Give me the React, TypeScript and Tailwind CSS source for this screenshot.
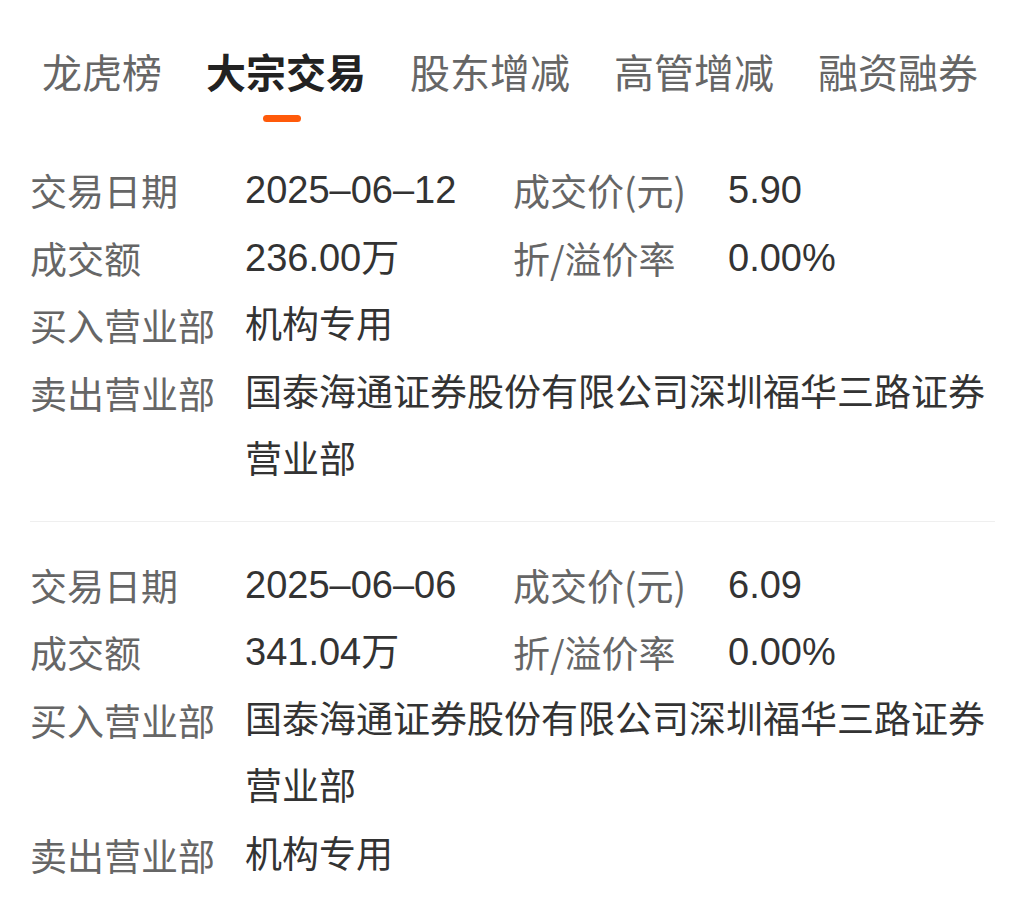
const tabs = ['龙虎榜', '大宗交易', '股东增减', '高管增减', '融资融券'];

type Deal = {
  date: string;
  price: string;
  amount: string;
  rate: string;
  buyer: string;
  seller: string;
};

const deals: Deal[] = [
  {
    date: '2025–06–12',
    price: '5.90',
    amount: '236.00万',
    rate: '0.00%',
    buyer: '机构专用',
    seller: '国泰海通证券股份有限公司深圳福华三路证券营业部',
  },
  {
    date: '2025–06–06',
    price: '6.09',
    amount: '341.04万',
    rate: '0.00%',
    buyer: '国泰海通证券股份有限公司深圳福华三路证券营业部',
    seller: '机构专用',
  },
];

const valueFont = { fontFamily: '"Liberation Sans", "Noto Sans CJK SC", sans-serif' };

function DealBlock({ deal }: { deal: Deal }) {
  return (
    <div className="grid grid-cols-[215px_268px_215px_1fr] leading-[67.5px] text-[37px]">
      <div className="text-[#666666]">交易日期</div>
      <div className="text-[38px] text-[#333333]" style={valueFont}>{deal.date}</div>
      <div className="text-[#666666]">成交价(元)</div>
      <div className="text-[38px] text-[#333333]" style={valueFont}>{deal.price}</div>

      <div className="text-[#666666]">成交额</div>
      <div className="text-[38px] text-[#333333]" style={valueFont}>{deal.amount}</div>
      <div className="text-[#666666]">折/溢价率</div>
      <div className="text-[38px] text-[#333333]" style={valueFont}>{deal.rate}</div>

      <div className="text-[#666666]">买入营业部</div>
      <div className="col-span-3 text-[#333333]" style={valueFont}>{deal.buyer}</div>

      <div className="text-[#666666]">卖出营业部</div>
      <div className="col-span-3 text-[#333333]" style={valueFont}>{deal.seller}</div>
    </div>
  );
}

function App() {
  return (
    <div
      className="min-h-screen bg-white"
      style={{ fontFamily: '"Noto Sans CJK SC", "Noto Sans", sans-serif' }}
    >
      <div className="flex gap-[44px] pl-[42px] pt-[51px]">
        {tabs.map((t) => {
          const active = t === '大宗交易';
          return (
            <div key={t} className="flex flex-col items-center">
              <span
                className={
                  active
                    ? 'text-[40px] leading-none font-bold text-[#222222]'
                    : 'text-[40px] leading-none text-[#666666]'
                }
              >
                {t}
              </span>
              <span
                className={
                  active
                    ? 'mt-[24px] mr-[9px] h-[7px] w-[38px] rounded-full bg-[#ff5a0a]'
                    : 'mt-[24px] h-[7px] w-[38px]'
                }
              />
            </div>
          );
        })}
      </div>

      <div className="pl-[30px] pr-[29px] pt-[35px]">
        <DealBlock deal={deals[0]} />
        <div className="mt-[26px] mb-[30px] h-px bg-[#efefef]" />
        <DealBlock deal={deals[1]} />
      </div>
    </div>
  );
}

export default App;
